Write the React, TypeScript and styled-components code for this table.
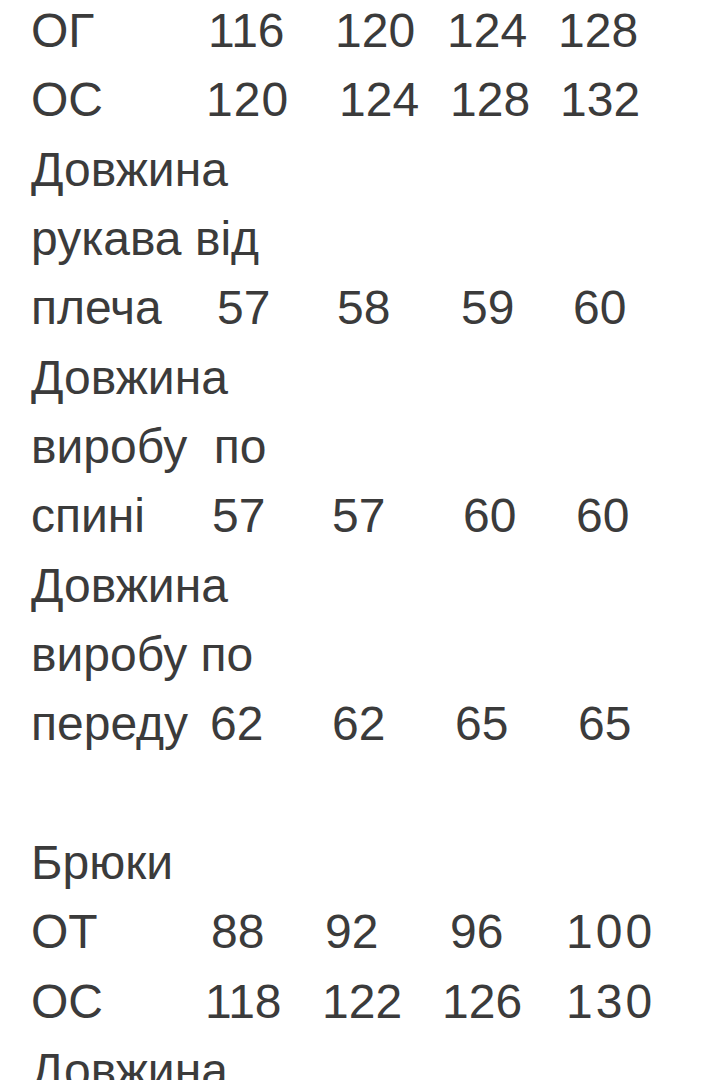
import React from "react";
import styled, { createGlobalStyle } from "styled-components";

const GlobalStyle = createGlobalStyle`
  html, body {
    margin: 0;
    padding: 0;
    background: #ffffff;
    overflow: hidden;
  }
  body {
    width: 720px;
    height: 1080px;
  }
`;

const Page = styled.main`
  width: 720px;
  height: 1080px;
  overflow: hidden;
  background: #ffffff;
`;

const Note = styled.div`
  margin-top: -4px;
  padding-left: 31px;
  font-family: "Liberation Sans", Arial, "Noto Sans", sans-serif;
  font-size: 48px;
  line-height: 69.35px;
  color: #3b3b3b;
  display: flex;
  flex-direction: column;
`;

const TextLine = styled.div`
  height: 69.35px;
  white-space: pre;
`;

const SizeRow = styled.div`
  display: grid;
  grid-template-columns: 179px 126px 116px 114px 1fr;
  height: 69.35px;
  white-space: pre;
`;

const Label = styled.span`
  display: block;
`;

const Value = styled.span<{ $nudge: number; $track: number }>`
  display: block;
  margin-left: ${(p) => p.$nudge}px;
  letter-spacing: ${(p) => p.$track}px;
`;

type Cell = [string, number, number?];

type Row =
  | { kind: "text"; text: string }
  | { kind: "sizes"; label: string; values: Cell[] };

const rows: Row[] = [
  { kind: "sizes", label: "ОГ", values: [["116", -2], ["120", -1], ["124", -5], ["128", -8]] },
  { kind: "sizes", label: "ОС", values: [["120", -4, 1], ["124", 3], ["128", -2], ["132", -6]] },
  { kind: "text", text: "Довжина" },
  { kind: "text", text: "рукава від" },
  { kind: "sizes", label: "плеча", values: [["57", 7], ["58", 1], ["59", 9], ["60", 7]] },
  { kind: "text", text: "Довжина" },
  { kind: "text", text: "виробу  по" },
  { kind: "sizes", label: "спині", values: [["57", 2], ["57", -4], ["60", 11], ["60", 10]] },
  { kind: "text", text: "Довжина" },
  { kind: "text", text: "виробу по" },
  { kind: "sizes", label: "переду", values: [["62", 0], ["62", -4], ["65", 3], ["65", 12]] },
  { kind: "text", text: "" },
  { kind: "text", text: "Брюки" },
  { kind: "sizes", label: "ОТ", values: [["88", 1], ["92", -11], ["96", -2], ["100", 0, 3]] },
  { kind: "sizes", label: "ОС", values: [["118", -5], ["122", -14], ["126", -10], ["130", 0, 3]] },
  { kind: "text", text: "Довжина" },
];

export default function App() {
  return (
    <Page>
      <GlobalStyle />
      <Note>
        {rows.map((row, i) =>
          row.kind === "text" ? (
            <TextLine key={i}>{row.text || "\u00a0"}</TextLine>
          ) : (
            <SizeRow key={i}>
              <Label>{row.label}</Label>
              {row.values.map(([v, n, t], j) => (
                <Value key={j} $nudge={n} $track={t ?? 0}>
                  {v}
                </Value>
              ))}
            </SizeRow>
          )
        )}
      </Note>
    </Page>
  );
}
